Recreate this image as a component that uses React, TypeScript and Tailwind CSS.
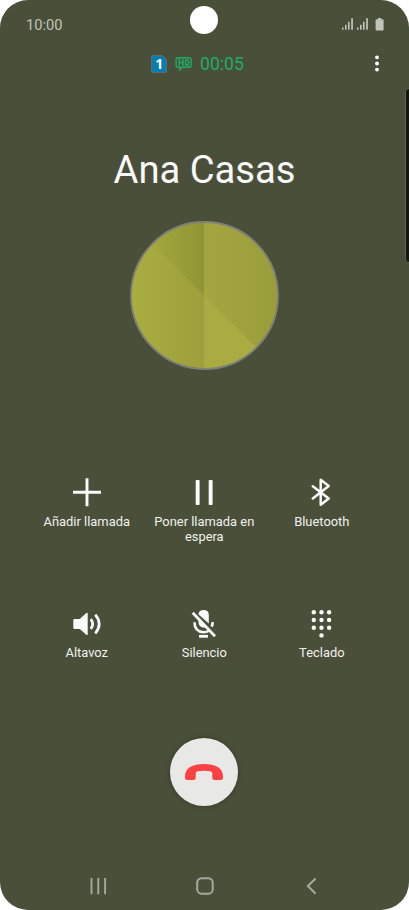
import type { ReactNode } from 'react';

const Signal: React.FC = () => (
  <svg className="h-3 w-[11px]" viewBox="0 0 11 12" fill="#c2c4bb">
    <rect x="0" y="9.5" width="1.5" height="2.2" />
    <rect x="3" y="6.8" width="1.6" height="4.9" />
    <rect x="6" y="3.8" width="1.6" height="7.9" />
    <rect x="9.2" y="0.2" width="1.7" height="11.5" />
  </svg>
);

const StatusBar: React.FC = () => (
  <div className="flex h-12 items-center justify-between pl-[26px] pr-[25px]">
    <span className="pt-0.5 text-[14.6px] leading-none text-[#c2c4bb]">10:00</span>
    <div className="flex items-center">
      <Signal />
      <div className="w-1" />
      <Signal />
      <svg className="ml-[7px] h-[13px] w-[9px]" viewBox="0 0 9 13" fill="#c2c4bb">
        <path d="M3 0h3.2v1.3h1.4q1 0 1 1v9.2q0 1-1 1h-6q-1 0-1-1V2.3q0-1 1-1H3z" />
      </svg>
    </div>
  </div>
);

const CallBar: React.FC = () => (
  <div className="flex h-[31px] items-center pl-[151px] pr-[30px]">
    <svg className="h-[18px] w-4 overflow-visible" viewBox="0 0 16 18">
      <path
        d="M2 .6h9.5l4 4V16q0 1.400-1.400 1.400H2Q.6 17.400.6 16V2Q.6.6 2 .6z"
        fill="#0a7bb5"
        stroke="#66746f"
        strokeWidth="0.8"
      />
      <text x="8.200" y="14" textAnchor="middle" fontSize="14" fontWeight="700" fill="#fff" fontFamily="Noto Sans, sans-serif">
        1
      </text>
    </svg>
    <svg className="ml-2 h-[14px] w-[17px]" viewBox="0 0 17 14" fill="none" stroke="#1ead66">
      <path d="M2.500.8h11q2.700 0 2.700 2.500v4.400q0 2.500-2.700 2.500H7L5 12.800V10.200H2.500Q1.100 10.200 1.100 8.800V2.200Q1.100.8 2.500.8z" strokeWidth="1.400" />
      <path d="M4.300 2v7.200M8 2v7.200M4.300 5.500H8M10.600 3v5h1.100q1.900 0 1.900-1.800V4.800q0-1.800-1.900-1.800z" strokeWidth="1.500" />
    </svg>
    <span className="ml-2 text-[17.6px] leading-[18px] text-[#1ead66]">00:05</span>
    <svg className="ml-auto h-[18px] w-1" viewBox="0 0 4 18" fill="#fff">
      <circle cx="2" cy="2.300" r="1.900" />
      <circle cx="2" cy="8.500" r="1.900" />
      <circle cx="2" cy="14.600" r="1.900" />
    </svg>
  </div>
);

const Avatar: React.FC = () => (
  <svg className="size-[149px]" viewBox="0 0 149 149">
    <defs>
      <linearGradient id="left" x1="0" x2="0.5">
        <stop offset="0" stopColor="#aaae40" />
        <stop offset="1" stopColor="#9d9f3c" />
      </linearGradient>
      <linearGradient id="left-top" gradientUnits="userSpaceOnUse" x1="23" x2="74" y1="0" y2="0">
        <stop offset="0" stopColor="#a3a73c" />
        <stop offset="0.5" stopColor="#9a9e38" />
        <stop offset="1" stopColor="#909434" />
      </linearGradient>
      <linearGradient id="right">
        <stop offset="0" stopColor="#a4a640" />
        <stop offset="1" stopColor="#999d3a" />
      </linearGradient>
      <clipPath id="disc">
        <circle cx="74.5" cy="74.5" r="73" />
      </clipPath>
    </defs>
    <g clipPath="url(#disc)">
      <path d="M0 0h149v149H0z" fill="url(#left)" />
      <path d="M0 0h74.200v74.500L0 1z" fill="url(#left-top)" />
      <path d="M74.200 0H149v149L74.200 74.500z" fill="url(#right)" />
      <path d="M74.200 74.500L149 149H74.200z" fill="#aaab43" />
    </g>
    <circle cx="74.5" cy="74.5" r="73.5" fill="none" stroke="#7f8278" strokeWidth="1.800" />
  </svg>
);

const keys = [
  [6.3, 2.3], [14, 2.3], [21.6, 2.3],
  [6.3, 10], [14, 10], [21.6, 10],
  [6.3, 17.8], [14, 17.8], [21.6, 17.8],
  [14, 25.4],
];

const actions: { label: string; icon: ReactNode }[] = [
  {
    label: 'Añadir llamada',
    icon: <path d="M14 0.300v28M0 14.300h28" stroke="#fafafa" strokeWidth="2.900" />,
  },
  {
    label: 'Poner llamada en espera',
    icon: (
      <g fill="#fafafa">
        <rect x="5.700" y="2" width="3.900" height="25" rx="0.800" />
        <rect x="18.700" y="2" width="3.900" height="25" rx="0.800" />
      </g>
    ),
  },
  {
    label: 'Bluetooth',
    icon: (
      <path
        d="M4.800 8.200L20.700 20.600L12.700 26.800V1.800L20.700 8L4.800 20.400"
        fill="none"
        stroke="#fafafa"
        strokeWidth="2.500"
        strokeLinecap="round"
        strokeLinejoin="round"
      />
    ),
  },
  {
    label: 'Altavoz',
    icon: (
      <g>
        <path d="M1.500 9H6.800L13 3.300Q14.700 2 14.700 3.500V24.200Q14.700 25.700 13 24.500L6.800 19H1.500Q.3 19 .3 17.800V10.200Q.3 9 1.500 9z" fill="#fafafa" />
        <path d="M17.700 9.200Q21.700 14 17.700 18.900M22.300 4.700Q30 14 22.300 23.500" fill="none" stroke="#fafafa" strokeWidth="2.700" />
      </g>
    ),
  },
  {
    label: 'Silencio',
    icon: (
      <g>
        <path d="M8.300 4.200Q9 .1 13.700.1Q18.800.1 18.800 5.200V13.600z" fill="#fafafa" />
        <path d="M8.500 9.200L15.800 17Q13.800 18 11.500 17Q8.500 15.500 8.500 12z" fill="#fafafa" />
        <path d="M4.500 12.300Q4.500 21.800 13.700 22.200Q16.700 22.200 18.800 20.700M22.600 12Q22.800 14.500 21.600 16.600" fill="none" stroke="#fafafa" strokeWidth="2.600" />
        <path d="M2.700 2.700L25 26.200" stroke="#fafafa" strokeWidth="2.700" />
        <path d="M9 24.900h9v2.800H9z" fill="#fafafa" />
      </g>
    ),
  },
  {
    label: 'Teclado',
    icon: (
      <g fill="#fafafa">
        {keys.map(([x, y]) => (
          <circle key={`${x}-${y}`} cx={x - 0.5} cy={y} r="2.200" />
        ))}
      </g>
    ),
  },
];

const NavBar: React.FC = () => (
  <div className="mt-auto flex h-12 items-center justify-between px-[89px]">
    <svg className="size-[18px]" viewBox="0 0 18 18" stroke="#a6a99e" strokeWidth="1.900">
      <path d="M2.500 1v16.200M9.300 1v16.200M16.100 1v16.200" />
    </svg>
    <svg className="size-[18px]" viewBox="0 0 18 18" fill="none" stroke="#a6a99e" strokeWidth="2">
      <rect x="1.200" y="1.200" width="15.500" height="15.500" rx="4.500" />
    </svg>
    <svg className="size-[18px]" viewBox="0 0 18 18" fill="none" stroke="#a6a99e" strokeWidth="2">
      <path d="M13.600 1.500L5.900 9L13.600 16.700" />
    </svg>
  </div>
);

const App: React.FC = () => {
  return (
    <main className="h-[910px] w-[409px] bg-white font-['Roboto',sans-serif]">
      <div className="relative flex h-full flex-col overflow-hidden rounded-[28px] bg-[#4a4f3a]">
        {/* Camera and edge handle */}
        <div className="absolute left-[190px] top-[6px] size-7 rounded-full bg-white" />
        <div className="absolute -right-1 top-[88px] h-[175px] w-2 rounded-md border border-[#5d6150] bg-[#14160f]" />

        <StatusBar />
        <CallBar />

        {/* Caller */}
        <div className="flex flex-col items-center">
          <h1 className="mt-[66px] text-[38.2px] leading-[50px] text-[#fafafa]">Ana Casas</h1>
          <div className="mt-[26px]">
            <Avatar />
          </div>
        </div>

        {/* Actions */}
        <div className="ml-7 mt-[108px] grid w-[352.6px] grid-cols-3 gap-y-[65.5px]">
          {actions.map((action) => (
            <div key={action.label} className="flex h-[66px] flex-col items-center">
              <svg className="h-[29px] w-7" viewBox="0 0 28 29">
                {action.icon}
              </svg>
              <span className="mt-[6.8px] w-[108px] text-center text-[12.9px] leading-[15px] text-[#f0f1ee]">
                {action.label}
              </span>
            </div>
          ))}
        </div>

        {/* Hang up */}
        <div className="ml-[170px] mt-[62.5px] flex size-[68px] items-center justify-center rounded-full bg-[#e8e8e6] shadow-[0_0_5px_rgba(0,0,0,0.3)]">
          <svg className="h-4 w-[38px]" viewBox="0 0 38 16" fill="#fb4141">
            <path d="M0 12.500C0 4 7.500 0 19 0S38 4 38 12.500V13.500Q38 16 35.500 16H30Q27.300 16 27.300 13.500V9.500Q27.300 7.700 25.500 7.300Q19 6.300 12.500 7.300Q10.700 7.700 10.700 9.500V13.500Q10.700 16 8 16H2.500Q0 16 0 13.500z" />
          </svg>
        </div>

        <NavBar />
      </div>
    </main>
  );
};

export default App;
